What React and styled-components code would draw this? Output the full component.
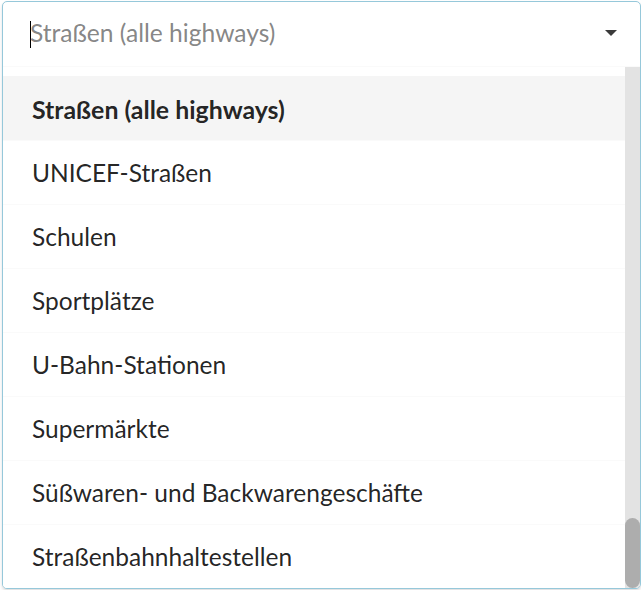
import React from "react";
import styled, { createGlobalStyle } from "styled-components";

const Global = createGlobalStyle`
  html, body { margin: 0; padding: 0; background: #fff; }
  body { font-family: Lato, "Helvetica Neue", Arial, sans-serif; overflow: hidden; }
`;

const Page = styled.div`
  padding: 1px 0 0 2px;
  width: 641px;
  height: 590px;
  box-sizing: border-box;
`;

const Dropdown = styled.div`
  width: 639px;
  height: 588px;
  box-sizing: border-box;
  border: 1px solid #96c8da;
  border-radius: 5px;
  background: #fff;
  display: flex;
  flex-direction: column;
  overflow: hidden;
  box-shadow: 0 2px 3px 0 rgba(34, 36, 38, 0.15);
`;

const Field = styled.div`
  height: 64px;
  flex: none;
  display: flex;
  align-items: center;
  padding: 0 23px 0 27px;
  box-sizing: border-box;
`;

const Caret = styled.span`
  width: 1px;
  height: 27px;
  background: #000;
  flex: none;
`;

const Placeholder = styled.span`
  flex: 1;
  font-size: 24.6px;
  color: rgba(115, 115, 115, 0.87);
  line-height: 1;
  margin-left: -1px;
  margin-top: -1px;
`;

const Arrow = styled.svg`
  width: 12px;
  height: 6px;
  flex: none;
  margin-bottom: 2px;
`;

const Menu = styled.div`
  flex: 1;
  min-height: 0;
  border-top: 1px solid #fafafa;
  display: grid;
  grid-template-columns: 1fr 15px;
`;

const Viewport = styled.div`
  overflow: hidden;
  display: flex;
  flex-direction: column;
  justify-content: flex-end;
`;

const Item = styled.div`
  height: 64px;
  flex: none;
  box-sizing: border-box;
  border-top: 1px solid ${(p) => (p.$first ? "transparent" : "#fafafa")};
  display: flex;
  align-items: center;
  padding: 0 0 0 29px;
  font-size: ${(p) => (p.$active ? "24.9px" : "24.5px")};
  color: rgba(0, 0, 0, 0.87);
  font-weight: ${(p) => (p.$active ? 700 : 400)};
  background: ${(p) => (p.$active ? "#f5f5f5" : "#fff")};
`;

const Track = styled.div`
  background: #e3e3e3;
  display: flex;
  flex-direction: column;
  justify-content: flex-end;
`;

const Thumb = styled.div`
  height: 70px;
  background: #adadad;
  border-radius: 8px;
`;

const items = [
  "Straßen (alle highways)",
  "UNICEF-Straßen",
  "Schulen",
  "Sportplätze",
  "U-Bahn-Stationen",
  "Supermärkte",
  "Süßwaren- und Backwarengeschäfte",
  "Straßenbahnhaltestellen",
];

export default function App() {
  return (
    <>
      <Global />
      <Page>
        <Dropdown>
          <Field>
            <Caret />
            <Placeholder>Straßen (alle highways)</Placeholder>
            <Arrow viewBox="0 0 12 6">
              <path d="M0 0 H12 L6 6 Z" fill="#3a3a3a" />
            </Arrow>
          </Field>
          <Menu>
            <Viewport>
              {items.map((t, i) => (
                <Item key={t} $active={i === 0} $first={i === 0}>
                  {t}
                </Item>
              ))}
            </Viewport>
            <Track>
              <Thumb />
            </Track>
          </Menu>
        </Dropdown>
      </Page>
    </>
  );
}
